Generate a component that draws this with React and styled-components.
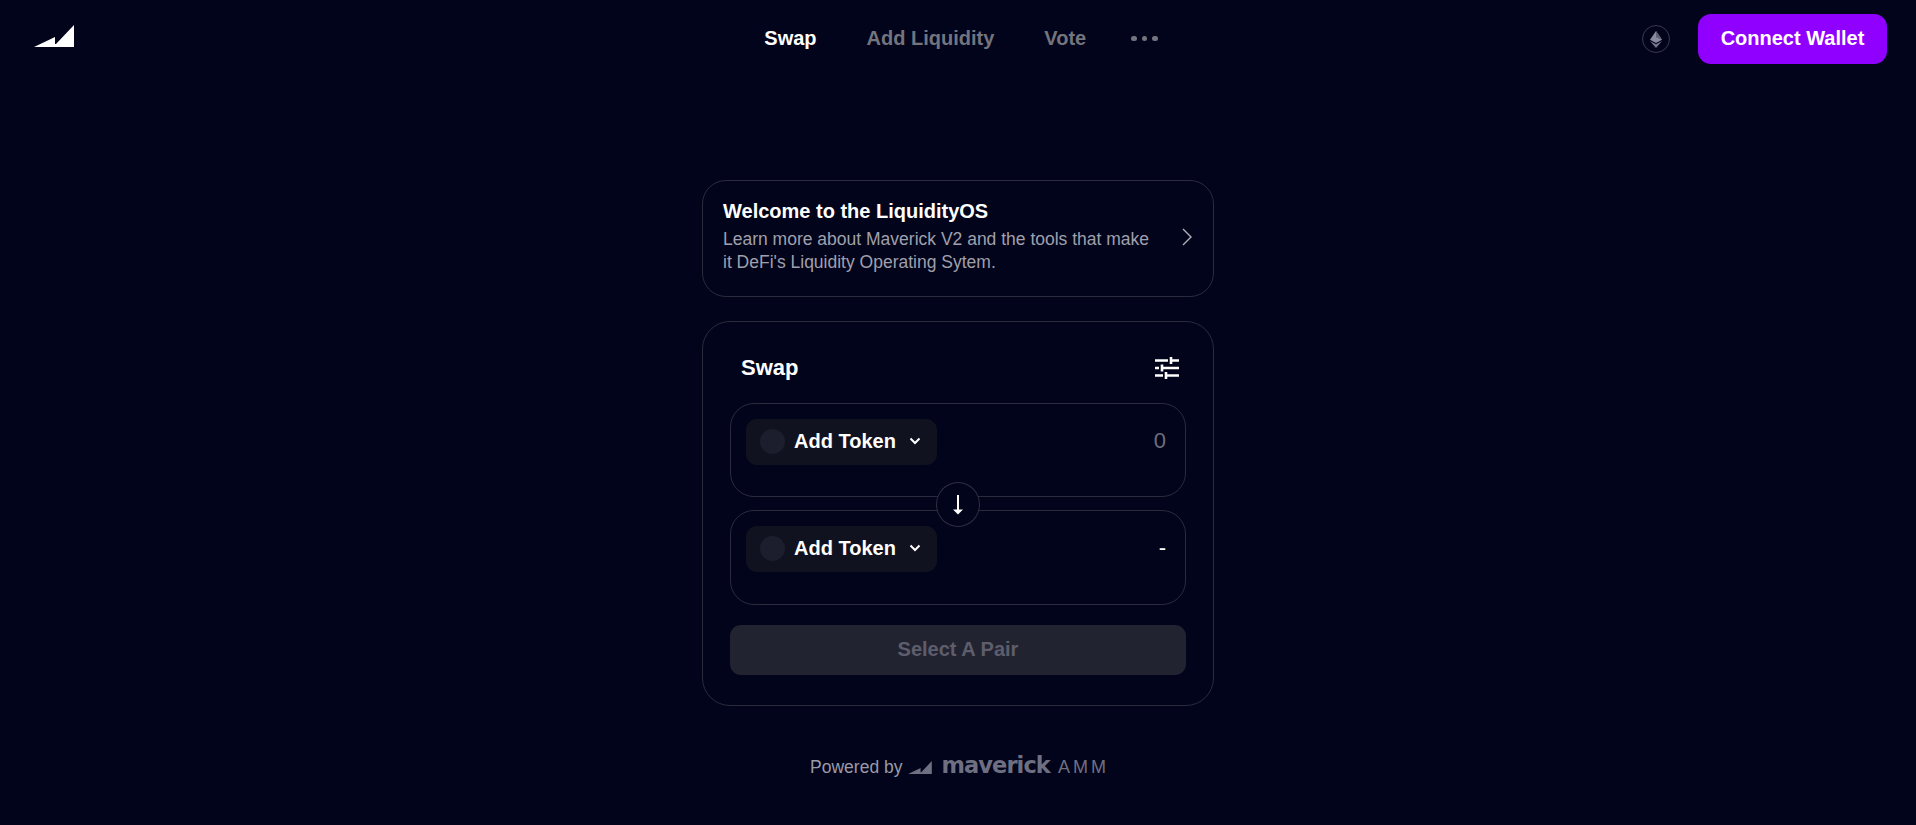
import React from "react";
import styled, { createGlobalStyle } from "styled-components";

const Global = createGlobalStyle`
  html, body { margin: 0; padding: 0; background: #02041b; }
  body { font-family: "Liberation Sans", Arial, sans-serif; color: #fff; }
  * { box-sizing: border-box; }
`;

const Page = styled.div`
  width: 100%;
  height: 825px;
  overflow: hidden;
  background: #02041b;
  display: flex;
  flex-direction: column;
`;

const Header = styled.header`
  height: 78px;
  padding: 0 29px 0 34px;
  display: grid;
  grid-template-columns: 1fr auto 1fr;
  align-items: center;
`;

const LogoBox = styled.div`
  display: flex;
  align-items: center;
  height: 22px;
  margin-top: -6px;
`;

const Nav = styled.nav`
  display: flex;
  align-items: center;
  gap: 50px;
  margin-left: 1px;
  margin-top: -1px;
`;

const NavItem = styled.span`
  font-size: 20px;
  font-weight: 700;
  color: ${(p) => (p.$active ? "#ffffff" : "#74747f")};
`;

const Dots = styled.div`
  display: flex;
  gap: 5px;
  margin-left: -5px;
`;

const Dot = styled.span`
  width: 5.5px;
  height: 5.5px;
  border-radius: 50%;
  background: #74747f;
`;

const HeaderRight = styled.div`
  display: flex;
  justify-content: flex-end;
  align-items: center;
  gap: 28px;
`;

const ChainBadge = styled.div`
  width: 28px;
  height: 28px;
  border-radius: 50%;
  border: 1px solid #3a3a4c;
  display: flex;
  align-items: center;
  justify-content: center;
`;

const ConnectButton = styled.button`
  width: 189px;
  height: 50px;
  padding: 0 0 2px;
  border: none;
  border-radius: 13px;
  background: #9000ff;
  color: #fff;
  font: 700 20px "Liberation Sans", Arial, sans-serif;
`;

const Main = styled.main`
  width: 512px;
  margin: 102px auto 0;
  display: flex;
  flex-direction: column;
  gap: 24px;
`;

const WelcomeCard = styled.section`
  height: 117px;
  border: 1px solid #2b2b3d;
  border-radius: 24px;
  padding: 18px 20px 0 20px;
  display: flex;
  align-items: flex-start;
  justify-content: space-between;
`;

const WelcomeText = styled.div`
  width: 430px;
`;

const WelcomeTitle = styled.h2`
  margin: 0 0 5px;
  font-size: 20px;
  line-height: 24px;
  font-weight: 700;
  color: #fff;
`;

const WelcomeBody = styled.p`
  margin: 0;
  font-size: 17.5px;
  line-height: 23px;
  color: #a0a0ac;
`;

const ChevronBox = styled.div`
  margin-top: 28px;
  display: flex;
`;

const SwapCard = styled.section`
  height: 385px;
  border: 1px solid #2b2b3d;
  border-radius: 28px;
  padding: 0 27px;
`;

const SwapHead = styled.div`
  height: 81px;
  padding: 10px 7px 0 11px;
  display: flex;
  align-items: center;
  justify-content: space-between;
`;

const SwapTitle = styled.h2`
  margin: 0;
  font-size: 22px;
  font-weight: 700;
`;

const Fields = styled.div`
  position: relative;
  display: flex;
  flex-direction: column;
  gap: 13px;
`;

const Field = styled.div`
  height: ${(p) => p.$h}px;
  border: 1px solid #2b2b3d;
  border-radius: 24px;
  padding: 15px 19px 0 15px;
  display: flex;
  align-items: flex-start;
  justify-content: space-between;
`;

const TokenButton = styled.button`
  width: 191px;
  height: 46px;
  padding: 0 15px 2px 14px;
  border: none;
  border-radius: 11px;
  background: #11121f;
  color: #fff;
  display: flex;
  align-items: center;
  font: 700 20px "Liberation Sans", Arial, sans-serif;
`;

const TokenDot = styled.span`
  width: 25px;
  height: 25px;
  border-radius: 50%;
  background: #1d1e2d;
  margin-right: 9px;
`;

const TokenLabel = styled.span`
  margin-right: 13px;
`;

const Amount = styled.span`
  font-size: 22px;
  line-height: 44px;
  color: ${(p) => (p.$muted ? "#6e6e7c" : "#ffffff")};
`;

const FlipButton = styled.div`
  position: absolute;
  left: 206px;
  top: 79px;
  width: 44px;
  height: 45px;
  border-radius: 50%;
  border: 1px solid #2f2f42;
  background: #02041b;
  display: flex;
  align-items: center;
  justify-content: center;
`;

const SelectButton = styled.button`
  display: block;
  width: 100%;
  height: 50px;
  margin-top: 20px;
  padding: 0 0 2px;
  border: none;
  border-radius: 11px;
  background: #222331;
  color: #5d5d6b;
  font: 700 20px "Liberation Sans", Arial, sans-serif;
`;

const Footer = styled.footer`
  margin-top: 48px;
  margin-left: 3px;
  display: flex;
  align-items: center;
  justify-content: center;
  color: #9a9aa8;
  font-size: 17.5px;
  height: 26px;
`;

const FooterLogo = styled.svg`
  margin: 0 9px 0 6px;
`;

const Wordmark = styled.span`
  font-family: "DejaVu Sans", sans-serif;
  font-weight: 700;
  font-size: 22.5px;
  letter-spacing: -0.9px;
  color: #6f6f82;
  margin-right: 8px;
  line-height: 20px;
  margin-top: -5px;
`;

const Amm = styled.span`
  font-size: 18px;
  letter-spacing: 3px;
  color: #6f6f82;
`;

const Logo = () => (
  <svg width="40" height="22" viewBox="0 0 40 22">
    <path d="M0 22 L21 12 L21 19 L22 19 L40 0 L40 22 Z" fill="#fff" />
  </svg>
);

const Eth = () => (
  <svg width="12" height="19" viewBox="0 0 14 20">
    <path d="M7 0 L14 10.2 L7 14 L0 10.2 Z" fill="#8a8aa0" />
    <path d="M7 0 L14 10.2 L7 7.5 Z" fill="#5f5f75" />
    <path d="M0 11.8 L7 15.6 L14 11.8 L7 20 Z" fill="#74748a" />
  </svg>
);

const Tune = () => (
  <svg width="24" height="22" viewBox="0 0 24 22" stroke="#fff" strokeWidth="2.6" fill="none">
    <path d="M0 3.5H13M16 0V7M16 3.5H24" />
    <path d="M0 11H4M7 7.5V14.5M7 11H24" />
    <path d="M0 18.5H8M11 15V22M11 18.5H24" />
  </svg>
);

const Chevron = () => (
  <svg width="12" height="10" viewBox="0 0 12 10" fill="none" stroke="#fff" strokeWidth="2">
    <path d="M1.5 2.5 L6 7 L10.5 2.5" />
  </svg>
);

const ChevronRight = () => (
  <svg width="12" height="20" viewBox="0 0 12 20" fill="none" stroke="#b0b0ba" strokeWidth="1.4">
    <path d="M2 2 L10 10 L2 18" />
  </svg>
);

const ArrowDown = () => (
  <svg width="12" height="20" viewBox="0 0 12 20" fill="#fff" stroke="none">
    <rect x="5" y="0" width="2" height="17" />
    <path d="M1 14.5 H11 L6 19.5 Z" />
  </svg>
);

const TokenRow = ({ amount, muted, h }) => (
  <Field $h={h}>
    <TokenButton>
      <TokenDot />
      <TokenLabel>Add Token</TokenLabel>
      <Chevron />
    </TokenButton>
    <Amount $muted={muted}>{amount}</Amount>
  </Field>
);

export default function App() {
  return (
    <Page>
      <Global />
      <Header>
        <LogoBox>
          <Logo />
        </LogoBox>
        <Nav>
          <NavItem $active>Swap</NavItem>
          <NavItem>Add Liquidity</NavItem>
          <NavItem>Vote</NavItem>
          <Dots>
            <Dot />
            <Dot />
            <Dot />
          </Dots>
        </Nav>
        <HeaderRight>
          <ChainBadge>
            <Eth />
          </ChainBadge>
          <ConnectButton>Connect Wallet</ConnectButton>
        </HeaderRight>
      </Header>
      <Main>
        <WelcomeCard>
          <WelcomeText>
            <WelcomeTitle>Welcome to the LiquidityOS</WelcomeTitle>
            <WelcomeBody>
              Learn more about Maverick V2 and the tools that make it DeFi's Liquidity Operating Sytem.
            </WelcomeBody>
          </WelcomeText>
          <ChevronBox>
            <ChevronRight />
          </ChevronBox>
        </WelcomeCard>
        <SwapCard>
          <SwapHead>
            <SwapTitle>Swap</SwapTitle>
            <Tune />
          </SwapHead>
          <Fields>
            <TokenRow amount="0" muted h={94} />
            <TokenRow amount="-" h={95} />
            <FlipButton>
              <ArrowDown />
            </FlipButton>
          </Fields>
          <SelectButton>Select A Pair</SelectButton>
        </SwapCard>
      </Main>
      <Footer>
        Powered by
        <FooterLogo width="24" height="13" viewBox="0 0 40 22">
          <path d="M0 22 L21 12 L21 19 L22 19 L40 0 L40 22 Z" fill="#6f6f82" />
        </FooterLogo>
        <Wordmark>maverick</Wordmark>
        <Amm>AMM</Amm>
      </Footer>
    </Page>
  );
}
